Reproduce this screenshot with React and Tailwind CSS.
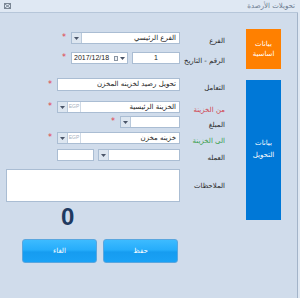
import React from 'react';

const AR = { fontFamily: '"DejaVu Sans", "Noto Sans", sans-serif' };

function Star() {
  return <span className="text-[8px] leading-none text-[#e0404a] mr-[5px]">*</span>;
}

function DropBtn() {
  return (
    <div className="w-[10px] h-full shrink-0 bg-[#dde6f0] border-r border-[#b9c9db] flex items-center justify-center">
      <svg width="5" height="3" viewBox="0 0 5 3"><path d="M0 0H5L2.5 3Z" fill="#4a5568" /></svg>
    </div>
  );
}

function Box({ className = '', children }) {
  return (
    <div className={`h-full bg-white border border-[#aabdd3] flex items-center overflow-hidden ${className}`}>
      {children}
    </div>
  );
}

function Txt({ children }) {
  return <span dir="rtl" className="flex-1 text-right pr-[3px] text-[7px] text-[#222] whitespace-nowrap">{children}</span>;
}

function Label({ children, color = 'text-[#2a2a2a]' }) {
  return (
    <div className="w-[46px] shrink-0 text-right pr-[1px]">
      <span dir="rtl" className={`text-[7px] whitespace-nowrap ${color}`}>{children}</span>
    </div>
  );
}

function Row({ h, mt, label, color, children }) {
  return (
    <div className="flex items-center" style={{ height: h, marginTop: mt }}>
      <div className="w-[180px] shrink-0 h-full flex items-center justify-end">{children}</div>
      <Label color={color}>{label}</Label>
    </div>
  );
}

function Treasury({ text }) {
  return (
    <Box className="w-[123px]">
      <DropBtn />
      <div className="w-[13px] h-full shrink-0 border-r border-[#d0dae6] flex items-center justify-center text-[5px] text-[#a4b0be]" style={{ fontFamily: '"Liberation Sans", sans-serif' }}>EGP</div>
      <Txt>{text}</Txt>
    </Box>
  );
}

export default function App() {
  return (
    <div className="w-[300px] h-[298px] bg-[#dfe8f3] overflow-hidden" style={AR}>
      {/* title bar */}
      <div className="h-[13px] flex items-center justify-between pl-[4px] pr-[3px] border-b border-[#b6c6d9] w-[298px]">
        <svg width="7" height="6" viewBox="0 0 7 6">
          <rect x="0.5" y="0.5" width="6" height="5" fill="none" stroke="#7a8694" />
          <path d="M1 1L6 5M6 1L1 5" stroke="#7a8694" />
        </svg>
        <span dir="rtl" className="text-[7px] text-[#6b7a8f]">تحويلات الأرصدة</span>
      </div>

      {/* body */}
      <div className="w-[298px] h-[285px] bg-[#d0dceb] border-r border-[#a3b4c9] flex">
        <div className="w-[246px] shrink-0">
          <Row h="12px" mt="19px" label="الفرع">
            <Star />
            <Box className="w-[109px]">
              <DropBtn />
              <Txt>الفرع الرئيسي</Txt>
            </Box>
          </Row>
          <Row h="12px" mt="8px" label="الرقم - التاريخ">
            <Star />
            <Box className="w-[57px]">
              <span className="pl-[2px] text-[7px] text-[#222]" style={{ fontFamily: '"Liberation Sans", sans-serif' }}>2017/12/18</span>
              <div className="ml-auto mr-[2px] flex items-center gap-[2px]">
                <div className="w-[4px] h-[5px] border border-[#8a95a3] bg-[#eef1f4]" />
                <svg width="5" height="3" viewBox="0 0 5 3"><path d="M0 0H5L2.5 3Z" fill="#4a5568" /></svg>
              </div>
            </Box>
            <Box className="w-[48px] ml-[4px] justify-center">
              <span className="text-[7px] text-[#222]" style={{ fontFamily: '"Liberation Sans", sans-serif' }}>1</span>
            </Box>
          </Row>
          <Row h="13px" mt="14px" label="التعامل">
            <Star />
            <Box className="w-[123px]">
              <Txt>تحويل رصيد لخزينه المخزن</Txt>
            </Box>
          </Row>
          <Row h="12px" mt="10px" label="من الخزينة" color="text-[#d0424f]">
            <Star />
            <Treasury text="الخزينة الرئيسية" />
          </Row>
          <Row h="12px" mt="3px" label="المبلغ">
            <Star />
            <Box className="w-[60px]">
              <DropBtn />
              <Txt></Txt>
            </Box>
          </Row>
          <Row h="12px" mt="4px" label="الى الخزينة" color="text-[#3a9e4e]">
            <Star />
            <Treasury text="خزينه مخزن" />
          </Row>
          <Row h="12px" mt="5px" label="العمله">
            <Box className="w-[37px]" />
            <Box className="w-[82px] ml-[4px]">
              <DropBtn />
              <Txt></Txt>
            </Box>
          </Row>
          <div className="flex items-start h-[33px] mt-[8px]">
            <div className="w-[180px] shrink-0 h-full pl-[6px]">
              <div className="w-full h-full bg-white border border-[#aabdd3]" />
            </div>
            <div className="pt-[2px]">
              <Label>الملاحظات</Label>
            </div>
          </div>
          <div className="h-[20px] mt-[5px] pl-[61px] flex items-center">
            <span className="text-[24px] font-bold text-[#1f3a60] leading-none" style={{ fontFamily: '"Liberation Sans", sans-serif' }}>0</span>
          </div>
          <div className="flex gap-[6px] pl-[22px] mt-[12px]">
            {['الغاء', 'حفظ'].map((t) => (
              <button
                key={t}
                className="w-[75px] h-[24px] rounded-[3px] border border-[#5aa6de] bg-[linear-gradient(#3dbbff,#26adfb_45%,#169cf0_55%,#1aa2f5)] text-white text-[7px] flex items-center justify-center"
                style={AR}
              >
                <span dir="rtl">{t}</span>
              </button>
            ))}
          </div>
        </div>

        <div className="w-[35px] shrink-0 pt-[16px] flex flex-col gap-[11px]">
          <div className="h-[40px] bg-[#ff8000] flex flex-col items-center justify-center text-white text-[7px] leading-[10px]">
            <span>بيانات</span>
            <span>اساسية</span>
          </div>
          <div className="h-[140px] bg-[#0078d7] flex flex-col items-center pt-[57px] text-white text-[7px] leading-[12px]">
            <span>بيانات</span>
            <span>التحويل</span>
          </div>
        </div>
      </div>
    </div>
  );
}
